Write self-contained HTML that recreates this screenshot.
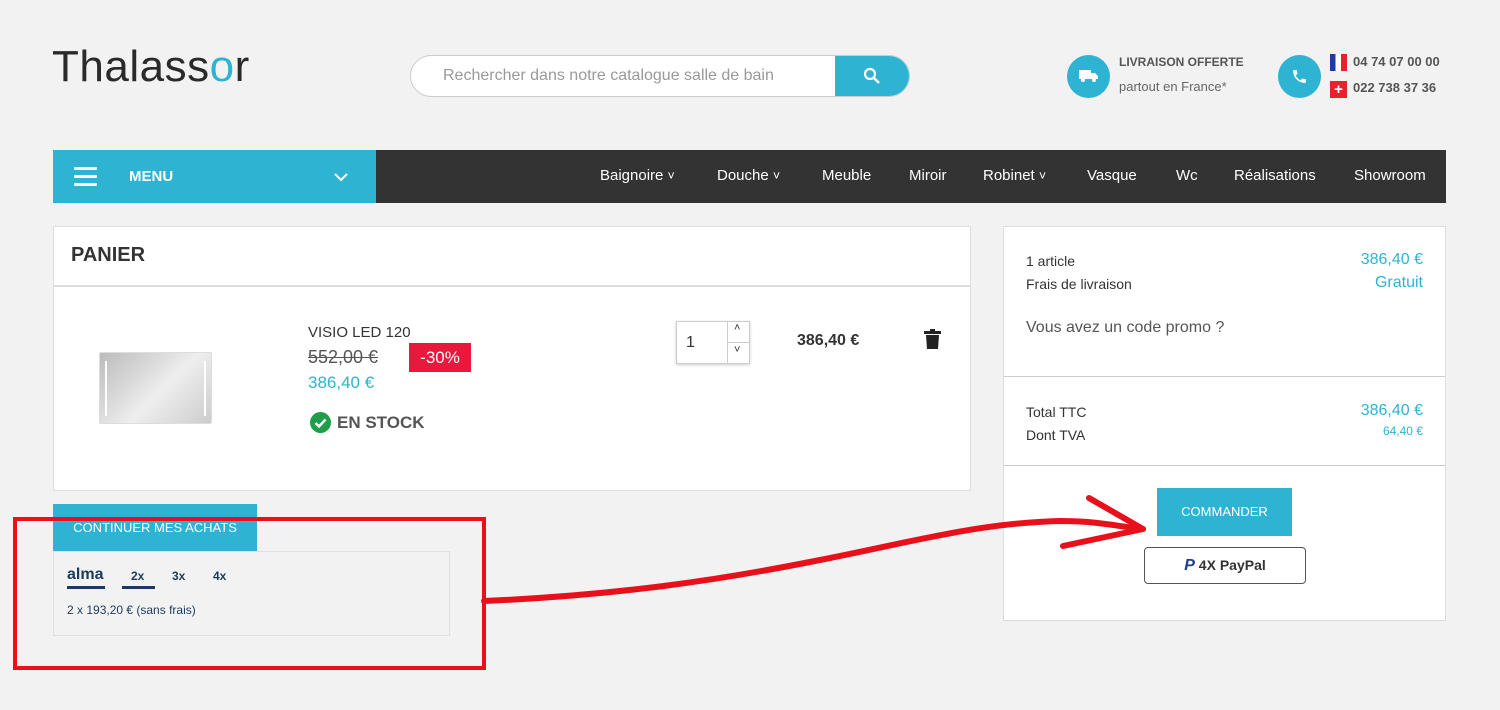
<!DOCTYPE html>
<html><head><meta charset="utf-8"><style>
*{margin:0;padding:0;box-sizing:border-box}
body{width:1500px;height:710px;background:#f2f2f2;font-family:"Liberation Sans",sans-serif;position:relative;overflow:hidden;color:#333}
.a{position:absolute}
.blue{color:#2fb3d3}
</style></head><body>
<div class="a" style="left:52px;top:42px;font-size:44px;color:#2a2a2a;letter-spacing:0.5px">Thalass<span style="color:#2fb3d3">o</span>r</div>
<div class="a" style="left:410px;top:55px;width:500px;height:42px;border:1px solid #ccc;border-radius:21px;background:#fff;overflow:hidden">
<div class="a" style="left:32px;top:11px;font-size:16px;color:#999">Rechercher dans notre catalogue salle de bain</div>
<div class="a" style="left:424px;top:-1px;width:76px;height:42px;background:#2fb3d3">
<svg class="a" style="left:28px;top:12px" width="18" height="18" viewBox="0 0 18 18"><circle cx="7" cy="7" r="5" fill="none" stroke="#fff" stroke-width="2.2"/><path d="M11 11l5 5" stroke="#fff" stroke-width="2.5"/></svg></div></div>
<div class="a" style="left:1067px;top:55px;width:43px;height:43px;border-radius:50%;background:#2fb3d3">
<svg class="a" style="left:12px;top:14px" width="20" height="14"><rect x="0" y="1" width="12" height="9" fill="#fff"/><path d="M12 4h4l3 3v3h-7z" fill="#fff"/><circle cx="4" cy="11" r="2" fill="#fff"/><circle cx="15" cy="11" r="2" fill="#fff"/></svg></div>
<div class="a" style="left:1119px;top:55px;font-size:12px;font-weight:bold;color:#555">LIVRAISON OFFERTE</div>
<div class="a" style="left:1119px;top:79px;font-size:13px;color:#666">partout en France*</div>
<div class="a" style="left:1278px;top:55px;width:43px;height:43px;border-radius:50%;background:#2fb3d3">
<svg class="a" style="left:13px;top:13px" width="17" height="17" viewBox="0 0 24 24"><path d="M6.6 10.8c1.4 2.8 3.8 5.1 6.6 6.6l2.2-2.2c.3-.3.7-.4 1-.2 1.1.4 2.3.6 3.6.6.6 0 1 .4 1 1V20c0 .6-.4 1-1 1C10.6 21 3 13.4 3 4c0-.6.4-1 1-1h3.5c.6 0 1 .4 1 1 0 1.3.2 2.5.6 3.6.1.3 0 .7-.2 1z" fill="#fff"/></svg></div>
<div class="a" style="left:1330px;top:54px;width:17px;height:17px;background:linear-gradient(90deg,#1f3c9c 33%,#fff 33%,#fff 66%,#e8212e 66%)"></div>
<div class="a" style="left:1330px;top:81px;width:17px;height:17px;background:#e8212e;color:#fff;font-weight:bold;font-size:15px;line-height:17px;text-align:center">+</div>
<div class="a" style="left:1353px;top:54px;font-size:13px;font-weight:bold;color:#555">04 74 07 00 00</div>
<div class="a" style="left:1353px;top:80px;font-size:13px;font-weight:bold;color:#555">022 738 37 36</div>
<div class="a" style="left:53px;top:150px;width:323px;height:53px;background:#2fb3d3">
<div class="a" style="left:21px;top:17px;width:23px;height:3px;background:#fff;box-shadow:0 8px 0 #fff,0 16px 0 #fff;border-radius:1px"></div>
<div class="a" style="left:76px;top:18px;font-size:15px;font-weight:bold;color:#fff">MENU</div>
<svg class="a" style="left:281px;top:22px" width="14" height="10"><path d="M1 2l6 6 6-6" fill="none" stroke="#fff" stroke-width="2"/></svg></div>
<div class="a" style="left:376px;top:150px;width:1070px;height:53px;background:#333;color:#fff;font-size:15px">
<span class="a" style="left:224px;top:17px">Baignoire <small>˅</small></span><span class="a" style="left:341px;top:17px">Douche <small>˅</small></span><span class="a" style="left:446px;top:17px">Meuble</span><span class="a" style="left:533px;top:17px">Miroir</span><span class="a" style="left:607px;top:17px">Robinet <small>˅</small></span><span class="a" style="left:711px;top:17px">Vasque</span><span class="a" style="left:800px;top:17px">Wc</span><span class="a" style="left:858px;top:17px">Réalisations</span><span class="a" style="left:978px;top:17px">Showroom</span></div>
<div class="a" style="left:53px;top:226px;width:918px;height:265px;background:#fff;border:1px solid #ddd">
<div class="a" style="left:17px;top:17px;font-size:20px;font-weight:bold;color:#333">PANIER</div>
<div class="a" style="left:0;top:58px;width:916px;height:2px;background:#ddd"></div>
<div class="a" style="left:45px;top:125px;width:113px;height:72px;background:linear-gradient(135deg,#bbb,#eee 55%,#ccc);border:1px solid #ddd;border-radius:2px">
<div class="a" style="left:5px;top:8px;width:2px;height:55px;background:#fff"></div><div class="a" style="left:104px;top:8px;width:2px;height:55px;background:#fff"></div></div>
<div class="a" style="left:254px;top:97px;font-size:15px">VISIO LED 120</div>
<div class="a" style="left:254px;top:120px;font-size:18px;color:#555;text-decoration:line-through">552,00 €</div>
<div class="a" style="left:355px;top:116px;width:62px;height:29px;background:#e8193c;color:#fff;font-size:17px;line-height:29px;text-align:center">-30%</div>
<div class="a blue" style="left:254px;top:146px;font-size:17px">386,40 €</div>
<div class="a" style="left:256px;top:185px;width:21px;height:21px;border-radius:50%;background:#1e9e4a"><svg width="21" height="21"><path d="M5.5 11l3.5 3.5 6.5-7" fill="none" stroke="#fff" stroke-width="2.5"/></svg></div>
<div class="a" style="left:283px;top:186px;font-size:17px;font-weight:bold;color:#555">EN STOCK</div>
<div class="a" style="left:622px;top:94px;width:74px;height:43px;border:1px solid #ccc;box-shadow:0 1px 3px rgba(0,0,0,.2)">
<div class="a" style="left:9px;top:12px;font-size:16px">1</div>
<div class="a" style="left:50px;top:0;width:1px;height:41px;background:#ccc"></div>
<div class="a" style="left:50px;top:20px;width:22px;height:1px;background:#ccc"></div>
<div class="a" style="left:57px;top:0px;font-size:11px">˄</div><div class="a" style="left:57px;top:22px;font-size:11px">˅</div></div>
<div class="a" style="left:743px;top:105px;font-size:16px;font-weight:bold">386,40 €</div>
<svg class="a" style="left:870px;top:102px" width="17" height="20"><rect x="0" y="2" width="17" height="3" fill="#222"/><rect x="6" y="0" width="5" height="3" fill="#222"/><path d="M2 6h13l-1 14H3z" fill="#222"/></svg></div>
<div class="a" style="left:53px;top:504px;width:204px;height:47px;background:#2fb3d3;color:#fff;font-size:13px;text-align:center;line-height:47px">CONTINUER MES ACHATS</div>
<div class="a" style="left:53px;top:551px;width:397px;height:85px;border:1px solid #e0e0e0;background:#f2f2f2">
<div class="a" style="left:13px;top:14px;font-size:16px;font-weight:bold;color:#1a3b5d">alma</div>
<div class="a" style="left:13px;top:34px;width:38px;height:3px;background:#1a3b5d"></div>
<div class="a" style="left:77px;top:17px;font-size:12px;font-weight:bold;color:#1a3b5d">2x</div>
<div class="a" style="left:68px;top:34px;width:33px;height:3px;background:#1a3b5d"></div>
<div class="a" style="left:118px;top:17px;font-size:12px;font-weight:bold;color:#1a3b5d">3x</div>
<div class="a" style="left:159px;top:17px;font-size:12px;font-weight:bold;color:#1a3b5d">4x</div>
<div class="a" style="left:13px;top:51px;font-size:12px;color:#1a3b5d">2 x 193,20 € (sans frais)</div></div>
<div class="a" style="left:1003px;top:226px;width:443px;height:395px;background:#fff;border:1px solid #ddd;font-size:14px">
<div class="a" style="left:22px;top:26px">1 article</div><div class="a blue" style="right:22px;top:24px;font-size:16px">386,40 €</div>
<div class="a" style="left:22px;top:49px">Frais de livraison</div><div class="a blue" style="right:22px;top:47px;font-size:16px">Gratuit</div>
<div class="a" style="left:22px;top:92px;font-size:16px;color:#555">Vous avez un code promo ?</div>
<div class="a" style="left:0;top:149px;width:441px;height:1px;background:#ccc"></div>
<div class="a" style="left:22px;top:177px">Total TTC</div><div class="a blue" style="right:22px;top:175px;font-size:16px">386,40 €</div>
<div class="a" style="left:22px;top:200px">Dont TVA</div><div class="a blue" style="right:22px;top:197px;font-size:12px">64,40 €</div>
<div class="a" style="left:0;top:238px;width:441px;height:1px;background:#ccc"></div>
<div class="a" style="left:153px;top:261px;width:135px;height:48px;background:#2fb3d3;color:#fff;font-size:13px;line-height:48px;text-align:center">COMMANDER</div>
<div class="a" style="left:140px;top:320px;width:162px;height:37px;border:1px solid #555;border-radius:4px;font-size:14px;font-weight:bold;line-height:35px;text-align:center"><span style="color:#1d3f8f;font-style:italic;font-size:16px">P</span> 4X PayPal</div></div>
<svg class="a" style="left:0;top:0" width="1500" height="710">
<rect x="15" y="519" width="469" height="149" fill="none" stroke="#e8111b" stroke-width="4"/>
<path d="M484 601C620 595 720 580 820 560 920 540 980 523 1060 521 1100 521 1120 527 1143 529" fill="none" stroke="#e8111b" stroke-width="6" stroke-linecap="round"/>
<path d="M1089 498L1143 529 1063 546" fill="none" stroke="#e8111b" stroke-width="6" stroke-linecap="round" stroke-linejoin="round"/>
</svg>
</body></html>
